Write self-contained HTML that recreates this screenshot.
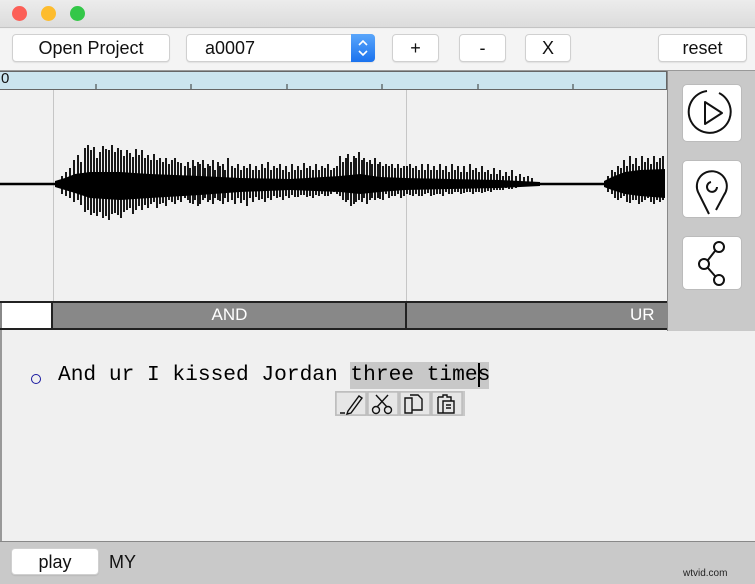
<!DOCTYPE html>
<html><head><meta charset="utf-8"><style>
*{margin:0;padding:0;box-sizing:border-box}
body{width:755px;height:584px;overflow:hidden;background:#f0f0f0;font-family:"Liberation Sans",sans-serif;position:relative}
.abs{position:absolute}
.btn{position:absolute;background:#fff;border:1px solid #d0d0d0;border-radius:4px;font-size:18px;text-align:center;line-height:26px;color:#111;box-shadow:0 1px 1px rgba(0,0,0,.08)}
.ib{position:absolute;left:682px;width:60px;background:#fff;border-radius:5px;border:1px solid #bbb}
</style></head><body>
<div class="abs" style="left:0;top:0;width:755px;height:28px;background:linear-gradient(#ececec,#dcdcdc);border-bottom:1px solid #c4c4c4"></div>
<div class="abs" style="left:12px;top:6px;width:15px;height:15px;border-radius:50%;background:#fc5f57"></div>
<div class="abs" style="left:41px;top:6px;width:15px;height:15px;border-radius:50%;background:#fdbc2e"></div>
<div class="abs" style="left:70px;top:6px;width:15px;height:15px;border-radius:50%;background:#33c748"></div>
<div class="abs" style="left:0;top:29px;width:755px;height:41px;background:#f4f4f4"></div>
<div class="btn" style="left:12px;top:34px;width:158px;height:28px">Open Project</div>
<div class="btn" style="left:186px;top:34px;width:189px;height:28px;text-align:left;padding-left:18px">a0007</div>
<div class="abs" style="left:351px;top:34px;width:24px;height:28px;background:linear-gradient(#5aa6fb,#1a72ee);border-radius:0 4px 4px 0"></div>
<svg class="abs" style="left:351px;top:34px" width="24" height="28" fill="none" stroke="#fff" stroke-width="1.6"><path d="M8 11L12 7L16 11M8 17L12 21L16 17"/></svg>
<div class="btn" style="left:392px;top:34px;width:47px;height:28px">+</div>
<div class="btn" style="left:459px;top:34px;width:47px;height:28px">-</div>
<div class="btn" style="left:525px;top:34px;width:46px;height:28px">X</div>
<div class="btn" style="left:658px;top:34px;width:89px;height:28px">reset</div>
<div class="abs" style="left:0;top:70px;width:755px;height:1px;background:#999"></div>
<div class="abs" style="left:0;top:71px;width:667px;height:19px;background:#cbe4ee;border:1px solid #666;border-left:none"></div>
<div class="abs" style="left:1px;top:70px;font-size:15px;color:#111">0</div>
<svg class="abs" style="left:0;top:71px" width="667" height="20"><path d="M96 13V18M191 13V18M287 13V18M382 13V18M478 13V18M573 13V18" stroke="#333" stroke-width="1"/></svg>
<div class="abs" style="left:0;top:90px;width:667px;height:211px;background:#f1f1f1"></div>
<div class="abs" style="left:53px;top:90px;width:1px;height:211px;background:#c6c6c6"></div>
<div class="abs" style="left:406px;top:90px;width:1px;height:211px;background:#c6c6c6"></div>
<svg class="abs" style="left:0;top:90px" width="667" height="211">
<g transform="translate(0,-90)">
<path d="M0 184H55M540 184H604" stroke="#000" stroke-width="2.5"/>
<polygon fill="#000" points="55,181 65,178 75,174 90,172 120,172 150,174 200,176 240,178 290,179 340,176 360,174 380,177 405,178 450,179 500,180 540,182 540,186 500,188 450,189 405,190 380,192 360,194 340,192 290,190 240,192 200,195 150,198 120,200 90,198 75,193 65,190 55,187"/>
<polygon fill="#000" points="604,181 612,177 625,172 640,170 665,169 665,198 640,196 625,194 612,190 604,187"/>
<path stroke="#000" stroke-width="1.8" d="M62 176V194M66 172V196M70 168V198M74 160V202M78 155V200M81 162V205M85 148V212M88 145V210M91 150V215M94 147V213M97 158V216M100 152V212M103 146V218M106 149V216M109 150V220M112 145V214M115 152V213M118 148V215M121 150V218M124 156V212M127 150V210M130 153V208M133 157V214M136 149V210M139 155V206M142 150V210M145 158V205M148 155V208M151 160V204M154 154V202M157 160V208M160 158V204M163 162V203M166 158V206M169 164V200M172 160V202M175 158V204M178 162V200M181 163V202M185 166V198M188 162V200M190 168V203M193 160V204M195 166V200M198 162V206M200 164V204M203 160V200M205 168V198M208 164V202M210 166V200M213 160V204M215 170V198M218 162V200M220 166V201M223 164V204M225 170V198M228 158V202M232 166V200M235 168V204M238 164V198M241 170V203M244 166V200M247 168V206M250 164V198M253 170V202M256 166V197M259 170V200M262 164V199M265 168V202M268 162V198M271 170V200M274 166V196M277 168V198M280 164V197M283 170V200M286 166V196M289 172V198M292 164V195M295 170V197M298 166V197M301 170V195M304 163V195M307 168V197M310 166V196M313 170V198M316 164V195M319 170V196M322 166V194M325 168V196M328 164V196M331 170V194M334 168V192M337 166V194M340 156V196M343 162V200M346 158V202M348 154V200M351 162V206M354 156V204M356 158V202M359 152V200M362 160V202M364 158V198M367 162V204M370 160V200M372 164V198M375 158V200M378 164V198M380 162V199M383 166V200M386 164V194M389 166V198M392 164V196M395 168V196M398 164V194M401 168V198M404 166V196M407 166V194M410 164V195M413 168V196M416 166V194M419 170V196M422 164V196M425 170V194M428 164V193M431 170V196M434 166V195M437 170V194M440 164V194M443 170V196M446 166V192M449 172V194M452 164V194M455 170V192M458 166V192M461 172V194M464 166V193M467 172V192M470 164V192M473 170V194M476 168V192M479 172V192M482 166V193M485 172V192M488 170V191M491 174V192M494 168V190M497 174V190M500 170V190M503 176V190M506 172V188M509 176V189M512 170V189M516 176V188M520 174V187M524 177V186M528 176V186M532 178V186M608 176V192M612 170V194M615 172V198M618 166V200M621 168V198M624 160V196M627 166V202M630 156V203M633 164V200M636 158V200M639 166V204M642 156V202M645 162V200M648 158V198M651 164V202M654 156V204M657 162V200M660 158V202M663 156V200"/>
</g></svg>
<div class="abs" style="left:667px;top:71px;width:88px;height:260px;background:#c9c9c9;border-left:1px solid #888"></div>
<div class="ib" style="top:84px;height:58px"></div>
<div class="ib" style="top:160px;height:58px"></div>
<div class="ib" style="top:236px;height:54px"></div>
<svg class="abs" style="left:682px;top:84px" width="60" height="210" fill="none" stroke="#111" stroke-width="2">
<path d="M25 7A21 21 0 1 0 37 9"/><path d="M23 18V40L40 29Z" stroke-linejoin="round"/>
<path d="M27 130L16 108A15 15 0 1 1 42 111L34 126"/><path d="M29 98A5 5 0 1 0 35 103"/>
<circle cx="37" cy="163" r="5"/><circle cx="22" cy="180" r="5"/><circle cx="37" cy="196" r="5"/><path d="M33 167L26 176M26 184L33 192"/>
</svg>
<div class="abs" style="left:0;top:301px;width:667px;height:29px;background:#888;border-top:2px solid #222;border-bottom:2px solid #222"></div>
<div class="abs" style="left:2px;top:303px;width:51px;height:25px;background:#fff;border-right:2px solid #222"></div>
<div class="abs" style="left:405px;top:303px;width:2px;height:25px;background:#222"></div>
<div class="abs" style="left:54px;top:305px;width:351px;text-align:center;color:#fff;font-size:17px">AND</div>
<div class="abs" style="left:630px;top:305px;color:#fff;font-size:17px">UR</div>
<div class="abs" style="left:0;top:330px;width:2px;height:212px;background:#999"></div>
<div class="abs" style="left:350px;top:362px;width:139px;height:27px;background:#c8c8c8"></div>
<div class="abs" style="left:31px;top:374px;width:10px;height:10px;border:1.5px solid #1a1aa0;border-radius:50%"></div>
<div class="abs" style="left:58px;top:363px;font-family:'Liberation Mono',monospace;font-size:21.2px;color:#000;white-space:pre">And ur I kissed Jordan three times</div>
<div class="abs" style="left:478px;top:363px;width:2px;height:24px;background:#000"></div>
<div class="abs" style="left:335px;top:391px;width:130px;height:25px;background:#c8c8c8"></div>
<svg class="abs" style="left:335px;top:391px" width="130" height="25" fill="none" stroke="#111" stroke-width="1.4">
<rect x="1" y="1" width="30" height="23" fill="#e6e6e6" stroke="#bbb"/><rect x="33" y="1" width="30" height="23" fill="#e6e6e6" stroke="#bbb"/><rect x="65" y="1" width="30" height="23" fill="#e6e6e6" stroke="#bbb"/><rect x="97" y="1" width="30" height="23" fill="#e6e6e6" stroke="#bbb"/>
<path d="M5 22H10M13 20L24 5L27 7L16 22L12 23Z"/>
<path d="M41 4L52 16M53 4L42 16"/><circle cx="41" cy="19" r="3.5"/><circle cx="53" cy="19" r="3.5"/>
<path d="M70 7H77V22H70Z M75 4H83L87 8V19H77"/>
<path d="M103 6H108V4H112V6H116V10 M103 6V22H108 M108 10H119V22H108Z M111 14H116M111 17H116"/>
</svg>
<div class="abs" style="left:0;top:541px;width:755px;height:43px;background:#c9c9c9;border-top:1px solid #888"></div>
<div class="btn" style="left:11px;top:548px;width:88px;height:27px">play</div>
<div class="abs" style="left:109px;top:552px;font-size:18px;color:#111">MY</div>
<div class="abs" style="left:683px;top:568px;font-size:10px;color:#222">wtvid.com</div>
</body></html>
